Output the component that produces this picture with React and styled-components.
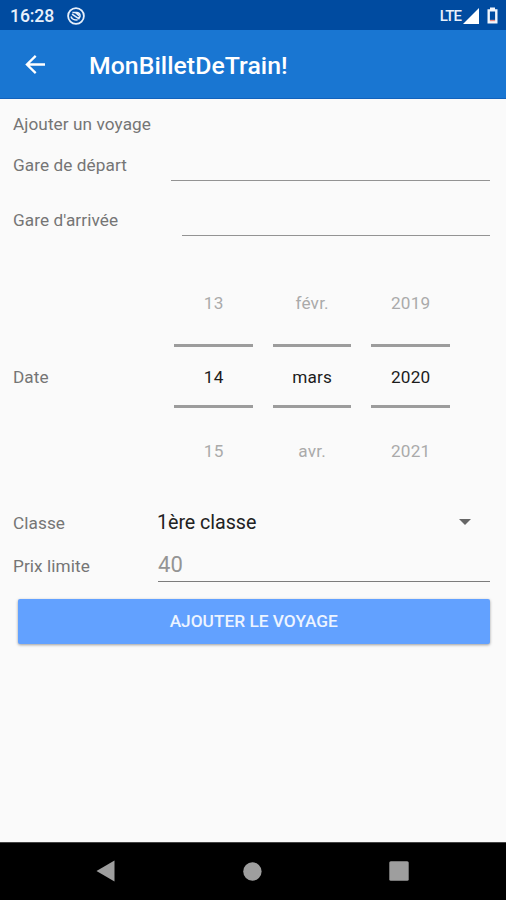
import React from "react";
import styled, { createGlobalStyle } from "styled-components";

const GlobalStyle = createGlobalStyle`
  * { box-sizing: border-box; }
  body { margin: 0; background: #fafafa; font-family: Roboto, sans-serif; }
`;

const Screen = styled.div`
  width: 506px;
  height: 900px;
  display: flex;
  flex-direction: column;
  background: #fafafa;
  overflow: hidden;
`;

const StatusBar = styled.header`
  height: 30px;
  flex: none;
  display: flex;
  align-items: center;
  padding: 1px 8px 0 10px;
  background: #004ba0;
  color: #e8f0fb;
`;

const Clock = styled.span`
  width: 57px;
  font-size: 17.6px;
  font-weight: 500;
  line-height: 30px;
  letter-spacing: -0.1px;
`;

const Network = styled.span`
  margin-left: auto;
  margin-right: 2px;
  font-size: 15px;
  font-weight: 500;
  letter-spacing: -0.9px;
`;

const Signal = styled.svg`
  margin-right: 8px;
`;

const AppBar = styled.div`
  height: 69px;
  flex: none;
  display: flex;
  align-items: center;
  gap: 43px;
  padding: 1px 0 0 25px;
  background: #1976d2;
  border-bottom: 1px solid #1262bc;
  color: #fff;
`;

const AppTitle = styled.h1`
  margin: 3px 0 0;
  font-size: 24.8px;
  font-weight: 500;
  line-height: 30px;
  letter-spacing: 0.05px;
`;

const Form = styled.main`
  flex: 1;
  display: flex;
  flex-direction: column;
  padding: 13px 16px 0 13px;
`;

const Label = styled.span`
  width: ${(p) => p.$width || 145}px;
  flex: none;
  font-size: 17.2px;
  line-height: 24px;
  letter-spacing: 0.08px;
  color: #757575;
`;

const Row = styled.div`
  display: flex;
  align-items: center;
  height: ${(p) => p.$height}px;
  margin-top: ${(p) => p.$gap || 0}px;
`;

const Field = styled.div`
  flex: 1;
  height: 37px;
  margin-bottom: 5px;
  border-bottom: 1px solid ${(p) => p.$line || "#939393"};
  font-size: 22px;
  line-height: 40px;
  letter-spacing: 0.1px;
  color: #949494;
`;

const DateLabel = styled(Label)`
  padding-top: 2px;
`;

const DatePicker = styled.div`
  display: flex;
  gap: 20px;
  margin-left: 16.4px;
`;

const Wheel = styled.div`
  width: 78.5px;
  display: flex;
  flex-direction: column;
  text-align: center;
  font-size: 17.2px;
  letter-spacing: 0.2px;
`;

const Neighbour = styled.span`
  height: 74px;
  line-height: ${(p) => (p.$below ? 86 : 66)}px;
  color: #aaa;
`;

const Selected = styled.span`
  height: 64px;
  line-height: 60px;
  border: solid #9c9c9c;
  border-width: 3px 0;
  color: #1c1c1c;
`;

const Spinner = styled.div`
  flex: 1;
  display: flex;
  align-items: center;
  justify-content: space-between;
  height: 30px;
  margin: 0 0 2px -1px;
  padding-right: 19px;
  font-size: 19.7px;
  letter-spacing: -0.05px;
  color: #222;
`;

const SubmitButton = styled.button`
  height: 45px;
  margin: 13px 0 0 4.5px;
  padding: 0 0 1px;
  border: 0;
  border-radius: 2px;
  background: #62a1ff;
  box-shadow: 0 1px 3px rgba(0, 0, 0, 0.38);
  color: #edf4ff;
  font: 500 17.3px Roboto, sans-serif;
`;

const NavBar = styled.nav`
  height: 58px;
  flex: none;
  display: flex;
  align-items: center;
  justify-content: space-between;
  padding: 0 97px 1px 96px;
  background: #000;
  border-top: 1px solid #444;
`;

const dates = [
  ["13", "14", "15"],
  ["févr.", "mars", "avr."],
  ["2019", "2020", "2021"],
];

export default function App() {
  return (
    <Screen>
      <GlobalStyle />
      <StatusBar>
        <Clock>16:28</Clock>
        <svg width="18" height="18" viewBox="0 0 18 18" fill="none" stroke="#e8f0fb">
          <circle cx="9" cy="9" r="7.9" strokeWidth="1.8" />
          <path d="M5.4 5.4H10C12.4 5.6 13.3 7.4 13 9.4L11.8 11.6L5 7.2" strokeWidth="1.5" />
          <path d="M4 9.4C4.8 12 7.6 13.4 10.6 12.8" strokeWidth="1.6" />
          <path d="M8 6H11.5L12.6 10.2Z" fill="#e8f0fb" stroke="none" />
        </svg>
        <Network>LTE</Network>
        <Signal width="16" height="16" viewBox="0 0 16 16">
          <path d="M0 16L16 0V16Z" fill="#fff" />
        </Signal>
        <svg width="11" height="17" viewBox="0 0 11 17">
          <path d="M3 .5H8V2.2H10.5V16.5H.5V2.2H3ZM2.9 4.6V13.2H8.1V4.6Z" fill="#f2f6fc" fillRule="evenodd" />
          <path d="M2.9 12.8H8.1V14.2H2.9Z" fill="#e98b83" />
        </svg>
      </StatusBar>
      <AppBar>
        <svg width="21" height="20" viewBox="0 0 21 20" fill="none" stroke="#fff" strokeWidth="2.3">
          <path d="M20 9.5H2M10.7 .9L1.9 9.5L10.7 18.1" />
        </svg>
        <AppTitle>MonBilletDeTrain!</AppTitle>
      </AppBar>
      <Form>
        <Label>Ajouter un voyage</Label>
        <Row $height={40} $gap={9}>
          <Label $width={158}>Gare de départ</Label>
          <Field />
        </Row>
        <Row $height={40} $gap={15}>
          <Label $width={169}>Gare d'arrivée</Label>
          <Field />
        </Row>
        <Row $height={212} $gap={30}>
          <DateLabel>Date</DateLabel>
          <DatePicker>
            {dates.map(([before, current, after]) => (
              <Wheel key={current}>
                <Neighbour>{before}</Neighbour>
                <Selected>{current}</Selected>
                <Neighbour $below>{after}</Neighbour>
              </Wheel>
            ))}
          </DatePicker>
        </Row>
        <Row $height={40} $gap={21}>
          <Label>Classe</Label>
          <Spinner>
            1ère classe
            <svg width="12" height="6" viewBox="0 0 12 6">
              <path d="M0 0H12L6 6Z" fill="#666" />
            </svg>
          </Spinner>
        </Row>
        <Row $height={40} $gap={3}>
          <Label>Prix limite</Label>
          <Field $line="#7c7c7c">40</Field>
        </Row>
        <SubmitButton>AJOUTER LE VOYAGE</SubmitButton>
      </Form>
      <NavBar>
        <svg width="19" height="22" viewBox="0 0 19 22">
          <path d="M.5 11L18.5 .5V21.5Z" fill="#9e9e9e" />
        </svg>
        <svg width="20" height="19" viewBox="0 0 20 19">
          <circle cx="10.4" cy="9.5" r="9.2" fill="#9e9e9e" />
        </svg>
        <svg width="20" height="20" viewBox="0 0 20 20">
          <rect x=".3" y=".3" width="19.4" height="19.4" rx="1.5" fill="#9e9e9e" />
        </svg>
      </NavBar>
    </Screen>
  );
}
